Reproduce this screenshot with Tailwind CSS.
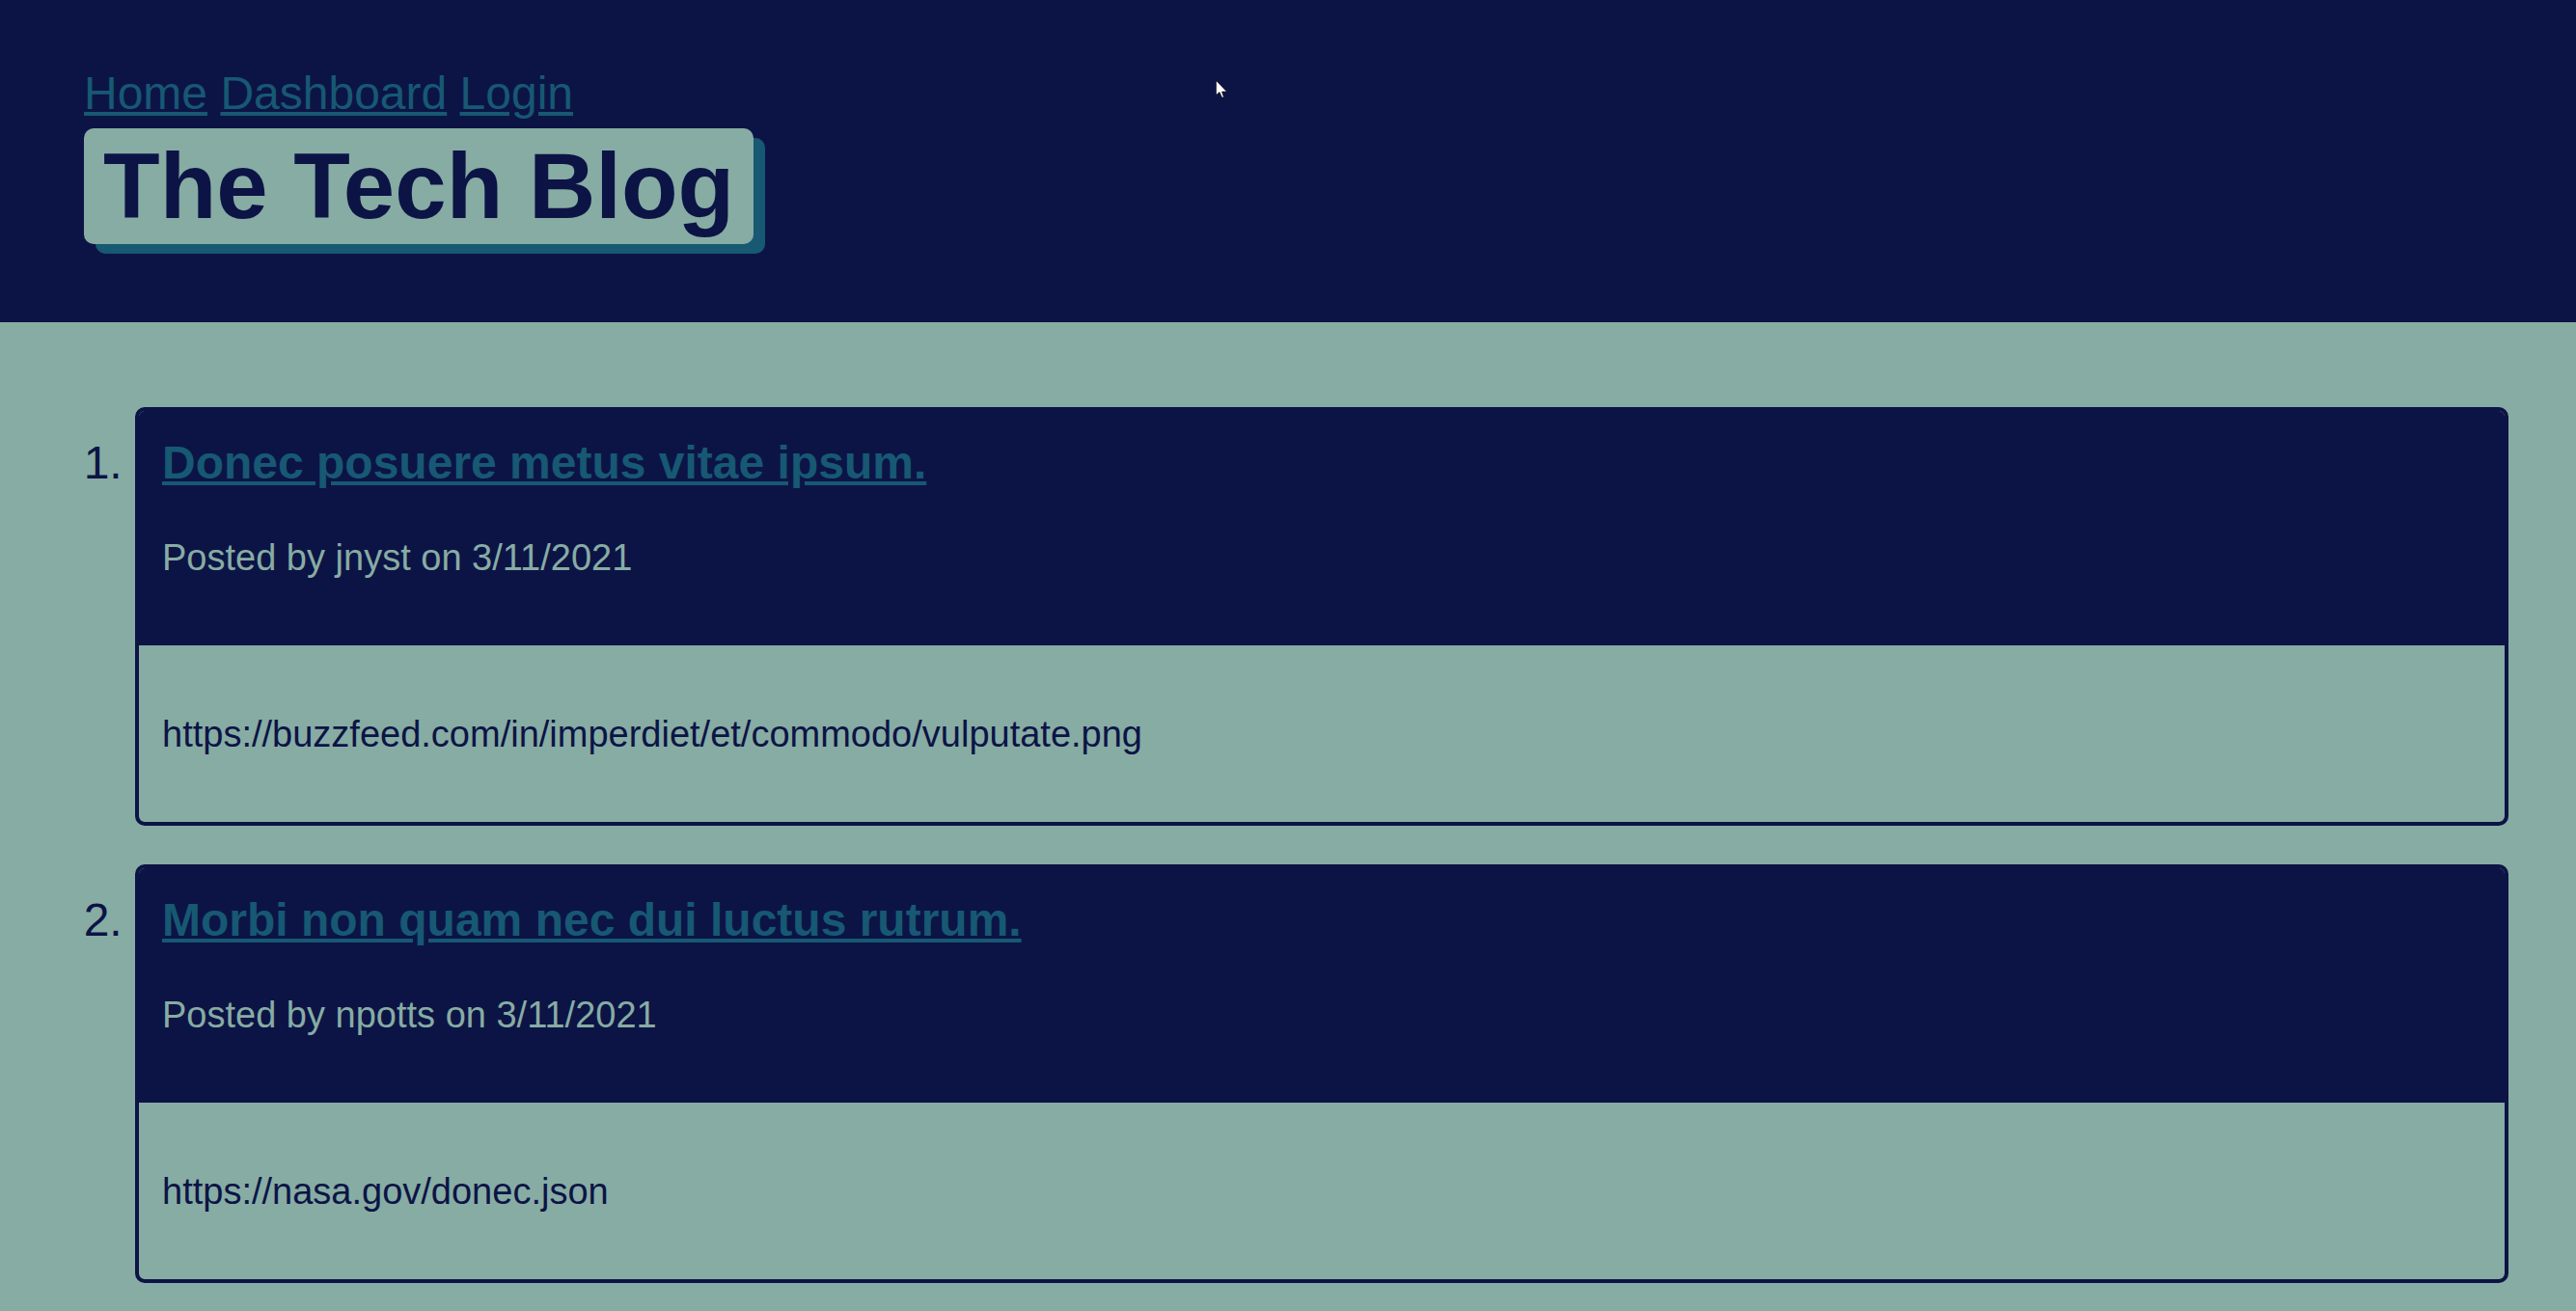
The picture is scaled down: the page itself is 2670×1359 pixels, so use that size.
<!DOCTYPE html>
<html lang="en">
<head>
<meta charset="utf-8">
<title>The Tech Blog</title>
<script src="https://cdn.jsdelivr.net/npm/@tailwindcss/browser@4"></script>
</head>
<body class="min-h-screen bg-[#87aca3] font-['Liberation_Sans',Arial,sans-serif] text-[38px] leading-[44px] text-[#0c1446]">
<header class="bg-[#0c1446] px-[87px] pt-[69px] pb-[81px]">
  <nav class="mb-[8px] text-[48px] leading-[56px] text-[#175873]">
    <a href="#" class="underline">Home</a>
    <a href="#" class="underline">Dashboard</a>
    <a href="#" class="underline">Login</a>
  </nav>
  <h1 class="w-fit rounded-[10px] bg-[#87aca3] px-[20px] text-[96px] leading-[120px] font-bold shadow-[12px_10px_0_#175873]">The Tech Blog</h1>
</header>
<main class="pt-[88px] pr-[70px] pb-[30px] pl-[140px]">
  <ol class="flex list-outside list-decimal flex-col gap-[40px]">
    <li class="text-[48px] leading-[56px]">
      <article class="overflow-hidden rounded-[10px] border-4 border-[#0c1446]">
        <header class="bg-[#0c1446] px-[24px] pt-[26px] pb-[69px]">
          <h2 class="mb-[48px] font-bold text-[#175873]"><a href="#" class="underline">Donec posuere metus vitae ipsum.</a></h2>
          <p class="text-[38px] leading-[44px] text-[#87aca3]">Posted by jnyst on 3/11/2021</p>
        </header>
        <p class="px-[24px] pt-[70px] pb-[69px] text-[38px] leading-[44px]">https://buzzfeed.com/in/imperdiet/et/commodo/vulputate.png</p>
      </article>
    </li>
    <li class="text-[48px] leading-[56px]">
      <article class="overflow-hidden rounded-[10px] border-4 border-[#0c1446]">
        <header class="bg-[#0c1446] px-[24px] pt-[26px] pb-[69px]">
          <h2 class="mb-[48px] font-bold text-[#175873]"><a href="#" class="underline">Morbi non quam nec dui luctus rutrum.</a></h2>
          <p class="text-[38px] leading-[44px] text-[#87aca3]">Posted by npotts on 3/11/2021</p>
        </header>
        <p class="px-[24px] pt-[70px] pb-[69px] text-[38px] leading-[44px]">https://nasa.gov/donec.json</p>
      </article>
    </li>
  </ol>
</main>
<svg class="pointer-events-none absolute top-[83px] left-[1260px]" width="12" height="19" viewBox="0 0 12 19" aria-hidden="true">
  <path d="M.5.5V15.500L4 12.500L6.500 18H8.500L6.500 12H11.500Z" fill="#fff" stroke="#000" stroke-width=".6"/>
</svg>
</body>
</html>
